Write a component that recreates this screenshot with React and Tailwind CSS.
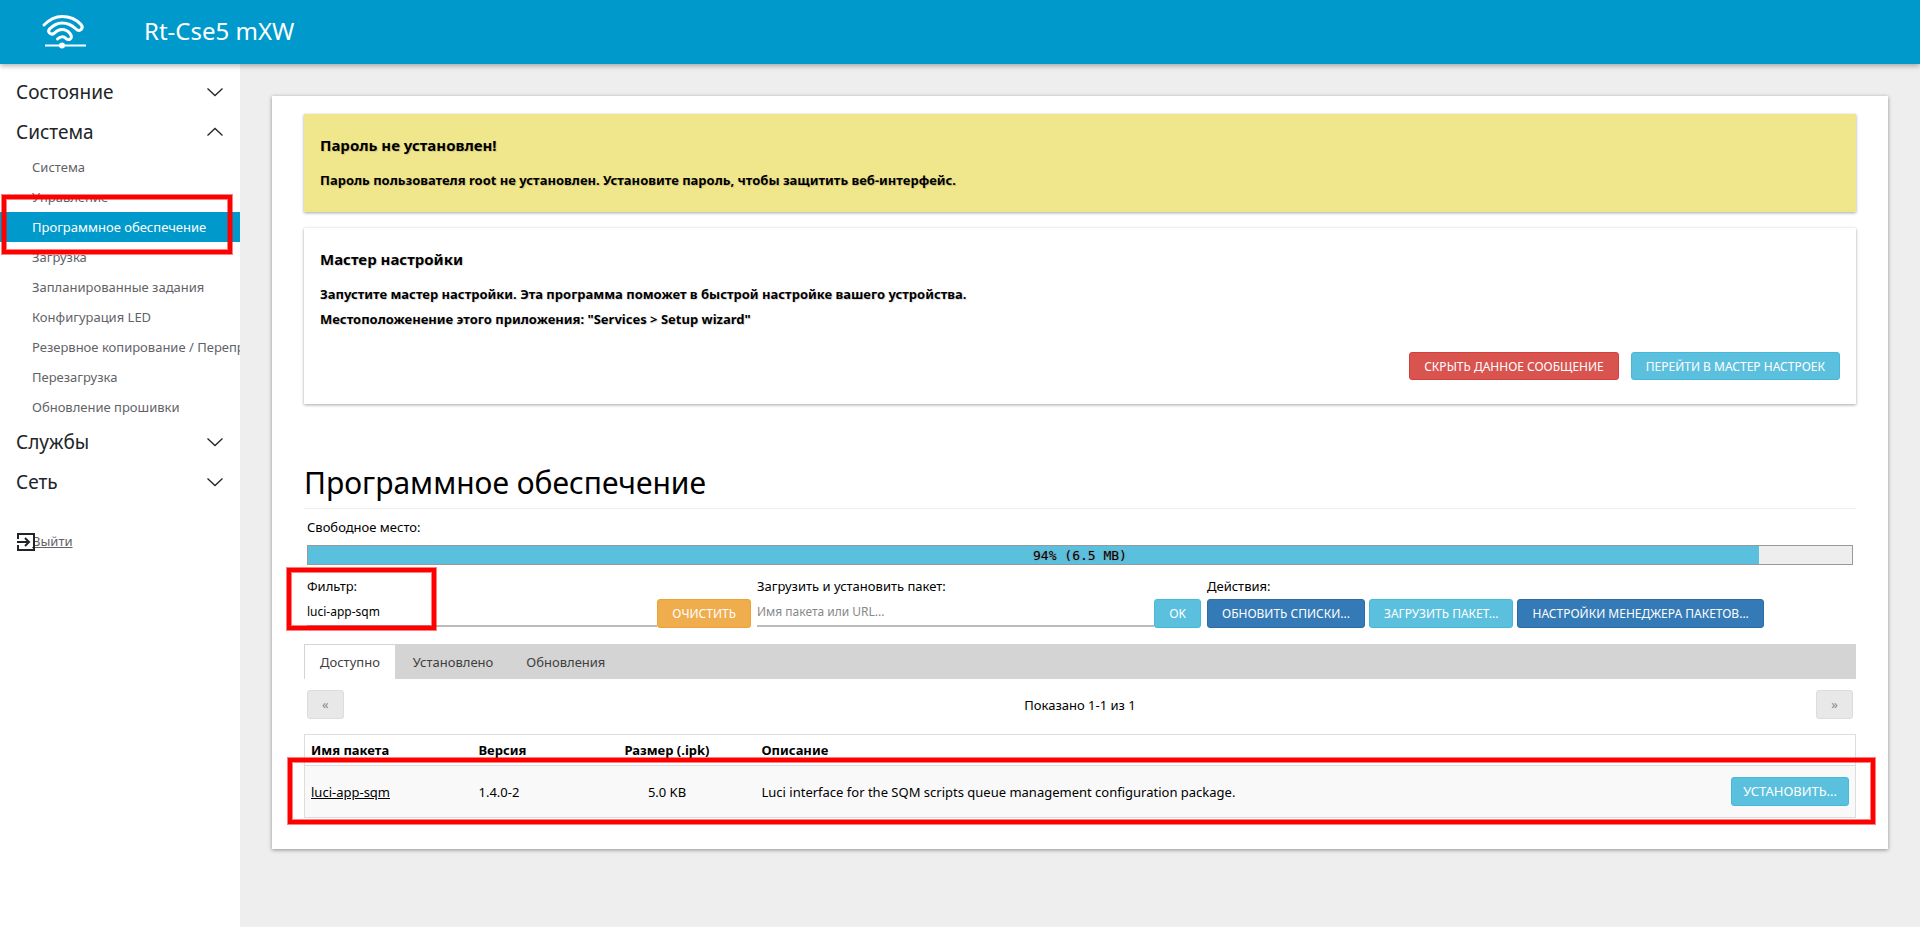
import { useState } from 'react';
import clsx from 'clsx';

const systemPages = [
  'Система',
  'Управление',
  'Программное обеспечение',
  'Загрузка',
  'Запланированные задания',
  'Конфигурация LED',
  'Резервное копирование / Перепрошивка',
  'Перезагрузка',
  'Обновление прошивки',
];

const menu = [
  { title: 'Состояние', items: [] },
  { title: 'Система', items: systemPages },
  { title: 'Службы', items: [] },
  { title: 'Сеть', items: [] },
];

const packages = [
  {
    name: 'luci-app-sqm',
    version: '1.4.0-2',
    size: '5.0 KB',
    description: 'Luci interface for the SQM scripts queue management configuration package.',
  },
];

const tabs = ['Доступно', 'Установлено', 'Обновления'];

const buttonColors = {
  red: 'border-[#d43f3a] bg-[#d9534f] text-white',
  cyan: 'border-[#46b8da] bg-[#5bc0de] text-white',
  blue: 'border-[#2e6da4] bg-[#337ab7] text-white',
  orange: 'border-[#eea236] bg-[#f0ad4e] text-white',
  gray: 'border-[#dcdcdc] bg-[#e8e8e8] text-[#888]',
};

function Button({ color, className, children, ...props }) {
  return (
    <button
      type="button"
      className={clsx('shrink-0 whitespace-nowrap rounded-[3px] border pt-px uppercase', buttonColors[color], className)}
      {...props}
    >
      {children}
    </button>
  );
}

// Red frame that marks a step of the guide
function Highlight({ className }) {
  return (
    <div
      className={clsx(
        'pointer-events-none absolute z-10 border-4 border-[#f00] shadow-[0_0_0_1px_rgba(255,0,0,0.5),inset_0_0_0_1px_rgba(255,0,0,0.5)]',
        className
      )}
    />
  );
}

function Logo() {
  return (
    <svg className="h-9 w-12" viewBox="0 0 48 36" fill="none" stroke="#fff" strokeWidth="3" strokeLinecap="round">
      <path d="M4 11C10 5 16 2.500 22 2.500S36 5 41 10.500C44 14 40 19 36 15C32 11 27 9 22 9S13 11.500 9.500 15" />
      <path d="M9.500 15C7 18 11 22 14.500 19C17 16.500 19.500 15.500 22 15.500S28 17 30 19.500C34 25 28 27 26 24.500C23.500 22 20 22.500 17.500 25" />
      <path d="M5 31.500H46" strokeWidth="2" strokeLinecap="butt" />
      <circle cx="22" cy="31.500" r="3" fill="#fff" stroke="none" />
    </svg>
  );
}

function Chevron({ open }) {
  return (
    <svg className="h-4 w-4" viewBox="0 0 16 16" fill="none" stroke="#212529" strokeWidth="1.300">
      <path d={open ? 'M0.500 11.500L8 4.500L15.500 11.500' : 'M0.500 4.500L8 11.500L15.500 4.500'} />
    </svg>
  );
}

function Sidebar() {
  const [openMenu, setOpenMenu] = useState('Система');

  return (
    <nav className="w-60 shrink-0 bg-white pt-2">
      <ul>
        {menu.map(({ title, items }) => (
          <li key={title}>
            <button
              type="button"
              aria-expanded={openMenu === title}
              onClick={() => setOpenMenu(openMenu === title ? '' : title)}
              className="flex h-10 w-full items-center justify-between pl-4 pr-[17px] text-[19px] text-[#212529]"
            >
              {title}
              <Chevron open={openMenu === title} />
            </button>
            {openMenu === title && (
              <ul>
                {items.map((item) => {
                  const active = item === 'Программное обеспечение';
                  return (
                    <li key={item} className="relative">
                      <a
                        href="#"
                        className={clsx(
                          'block h-[30px] overflow-hidden whitespace-nowrap pl-8 leading-[30px]',
                          active ? 'bg-[#0099cc] text-white' : 'text-[#5f6368]'
                        )}
                      >
                        {item}
                      </a>
                      {active && <Highlight className="-bottom-3 -top-[17px] left-0.5 right-2" />}
                    </li>
                  );
                })}
              </ul>
            )}
          </li>
        ))}
      </ul>
      <a href="#" className="relative mt-5 flex h-10 items-center pl-8 text-[#5f6368]">
        <span className="underline">Выйти</span>
        <svg
          className="absolute left-[17px] h-[18px] w-[18px]"
          viewBox="0 0 18 18"
          fill="none"
          stroke="#212529"
          strokeWidth="2"
        >
          <path d="M1 6V1H17V17H1V12M0 9H12" />
          <path d="M8 5L12 9L8 13" />
        </svg>
      </a>
    </nav>
  );
}

function Notices() {
  return (
    <>
      <section className="bg-[#f0e68c] px-4 pb-5 pt-[19px] font-bold shadow-[0_1px_3px_rgba(0,0,0,0.35)] [text-shadow:1px_1px_1px_rgba(0,0,0,0.15)]">
        <h4 className="text-[15px] leading-6">Пароль не установлен!</h4>
        <p className="mt-[11px] leading-6">
          Пароль пользователя root не установлен. Установите пароль, чтобы защитить веб-интерфейс.
        </p>
      </section>
      <section className="mt-4 px-4 pb-6 pt-[19px] font-bold shadow-[0_1px_3px_rgba(0,0,0,0.35)]">
        <h4 className="text-[15px] leading-6 [text-shadow:1px_1px_1px_rgba(0,0,0,0.15)]">Мастер настройки</h4>
        <p className="mt-[11px] leading-[25px] [text-shadow:1px_1px_1px_rgba(0,0,0,0.15)]">
          Запустите мастер настройки. Эта программа поможет в быстрой настройке вашего устройства.
          <br />
          Местоположенение этого приложения: "Services &gt; Setup wizard"
        </p>
        <div className="mt-5 flex justify-end gap-3 text-xs font-normal">
          <Button color="red" className="h-7 px-3.5">Скрыть данное сообщение</Button>
          <Button color="cyan" className="h-7 px-3.5">Перейти в мастер настроек</Button>
        </div>
      </section>
    </>
  );
}

function Controls() {
  const [filter, setFilter] = useState('luci-app-sqm');
  const inputClass =
    'h-7 w-full min-w-0 border-b-2 border-[#bbb] pb-0.5 text-xs text-black outline-none placeholder:text-[#888]';
  const buttonClass = 'h-[29px] px-3.5 text-xs';

  return (
    <div className="px-[3px] pt-1.5">
      <div className="leading-6">Свободное место:</div>
      <div className="relative mt-1.5 h-5 border border-[#999] bg-[#eee]">
        <div className="h-full w-[94%] bg-[#5bc0de]" />
        <div className="absolute inset-0 text-center font-['DejaVu_Sans_Mono',monospace] leading-5 [text-shadow:0_0_2px_#888]">
          94% (6.5 MB)
        </div>
      </div>
      <div className="mt-2 grid grid-cols-[444fr_444fr_646fr] gap-1.5">
        <div className="relative">
          <label htmlFor="filter" className="block leading-[26px]">Фильтр:</label>
          <div className="flex">
            <input
              id="filter"
              className={inputClass}
              value={filter}
              onChange={(e) => setFilter(e.target.value)}
            />
            <Button color="orange" className={buttonClass} onClick={() => setFilter('')}>Очистить</Button>
          </div>
          <Highlight className="-bottom-0.5 -left-5 -top-[5px] w-[149px]" />
        </div>
        <div>
          <label htmlFor="install" className="block leading-[26px]">Загрузить и установить пакет:</label>
          <div className="flex">
            <input id="install" className={inputClass} placeholder="Имя пакета или URL..." />
            <Button color="cyan" className={buttonClass}>OK</Button>
          </div>
        </div>
        <div>
          <div className="leading-[26px]">Действия:</div>
          <div className="flex gap-1">
            <Button color="blue" className={buttonClass}>Обновить списки...</Button>
            <Button color="cyan" className={buttonClass}>Загрузить пакет...</Button>
            <Button color="blue" className={buttonClass}>Настройки менеджера пакетов...</Button>
          </div>
        </div>
      </div>
    </div>
  );
}

function PackageTable() {
  return (
    <div className="relative mt-[15px]">
      <table className="w-full border border-[#ddd]">
        <thead>
          <tr className="h-[31px] text-left">
            <th className="w-[168px] px-1.5 pt-0.5">Имя пакета</th>
            <th className="w-[106px] px-1.5 pt-0.5">Версия</th>
            <th className="w-[177px] px-1.5 pt-0.5 text-center">Размер (.ipk)</th>
            <th className="px-1.5 pt-0.5">Описание</th>
            <th aria-label="Действия" />
          </tr>
        </thead>
        <tbody>
          {packages.map((pkg) => (
            <tr key={pkg.name} className="h-[52px] border-t border-[#ddd] bg-[#f9f9f9]">
              <td className="px-1.5 pt-0.5"><a href="#" className="underline">{pkg.name}</a></td>
              <td className="px-1.5 pt-0.5">{pkg.version}</td>
              <td className="px-1.5 pt-0.5 text-center">{pkg.size}</td>
              <td className="px-1.5 pt-0.5">{pkg.description}</td>
              <td className="px-1.5 text-right">
                <Button color="cyan" className="h-[29px] px-[11px]">Установить...</Button>
              </td>
            </tr>
          ))}
        </tbody>
      </table>
      <Highlight className="-bottom-1.5 -left-4 -right-[19px] top-6" />
    </div>
  );
}

export default function App() {
  const [tab, setTab] = useState('Доступно');

  return (
    <div className="flex min-h-screen flex-col bg-[#eee] font-['Noto_Sans',sans-serif] text-[13px] text-black">
      <header className="relative z-20 flex h-16 items-center bg-[#0099cc] pl-10 shadow-[0_2px_5px_rgba(0,0,0,0.3)]">
        <Logo />
        <a href="#" className="ml-14 pb-0.5 text-2xl text-white">Rt-Cse5 mXW</a>
      </header>

      <div className="flex flex-1">
        <Sidebar />
        <main className="min-w-0 flex-1 p-8">
          <div className="bg-white px-8 pb-[31px] pt-[18px] shadow-[0_1px_4px_rgba(0,0,0,0.4)]">
            <Notices />

            <h2 className="mt-14 border-b border-[#eee] pb-0.5 text-[30px] leading-[46px]">Программное обеспечение</h2>
            <Controls />

            <div className="mt-4 flex gap-0.5 bg-[#d4d4d4]" role="tablist">
              {tabs.map((name) => (
                <button
                  key={name}
                  type="button"
                  role="tab"
                  aria-selected={tab === name}
                  onClick={() => setTab(name)}
                  className={clsx(
                    'h-[35px] border-l border-t border-[#d4d4d4] px-[15px] pt-0.5 text-[#404040]',
                    tab === name && 'bg-white'
                  )}
                >
                  {name}
                </button>
              ))}
            </div>

            <div className="mt-[11px] flex items-center justify-between px-[3px]">
              <Button color="gray" className="h-[29px] px-3.5" disabled aria-label="Назад">«</Button>
              <span className="pt-0.5">Показано 1-1 из 1</span>
              <Button color="gray" className="h-[29px] px-3.5" disabled aria-label="Вперёд">»</Button>
            </div>

            <PackageTable />
          </div>
        </main>
      </div>
    </div>
  );
}
